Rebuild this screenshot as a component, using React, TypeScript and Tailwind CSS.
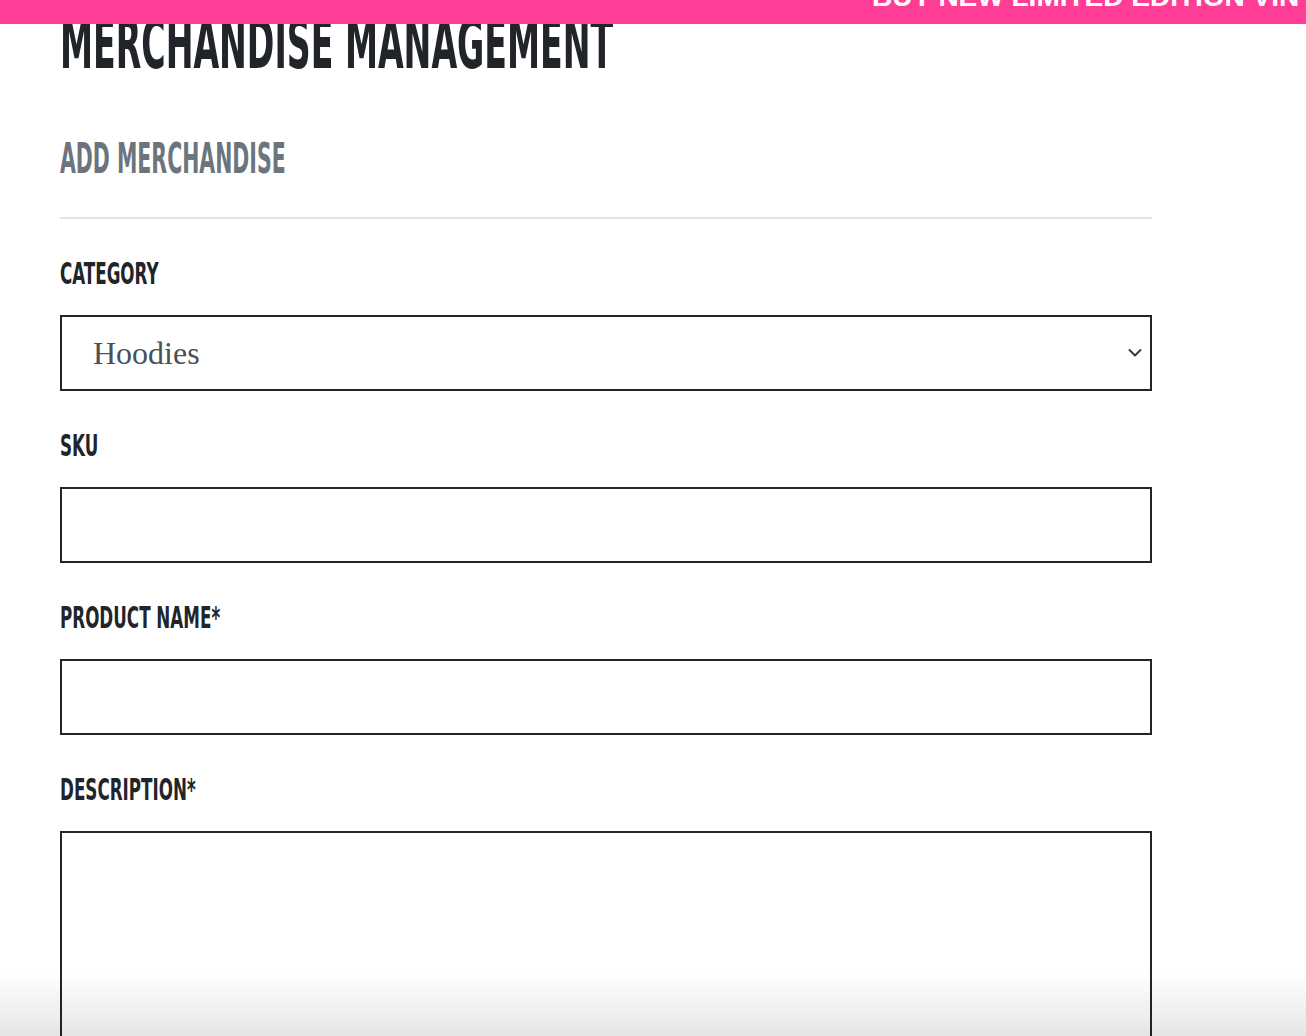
import React from 'react';

const display = { fontFamily: "'Liberation Sans Narrow', 'DejaVu Sans Condensed', 'Liberation Sans', sans-serif" };

interface FieldProps {
  label: string;
  children: React.ReactNode;
}

const Field: React.FC<FieldProps> = ({ label, children }) => (
  <div>
    <label
      style={display}
      className="mt-[39px] block h-[31px] text-[31px] font-bold leading-none text-[#212529] whitespace-nowrap"
    >
      <span className="inline-block origin-left scale-x-[0.6]">{label}</span>
    </label>
    <div className="mt-[26px]">{children}</div>
  </div>
);

export default function App() {
  return (
    <div className="relative h-[1036px] overflow-hidden bg-white">
      {/* promo banner, sits over the page */}
      <div className="absolute inset-x-0 top-0 z-10 h-[24px] overflow-hidden bg-[#ff3c96]">
        <span
          className="absolute left-[872px] top-[-17px] whitespace-nowrap text-[28px] font-bold leading-none text-white"
          style={{ fontFamily: "'Liberation Sans', sans-serif" }}
        >
          BUY NEW LIMITED EDITION VINYL NOW
        </span>
      </div>

      <main className="pl-[60px] w-[1152px]">
        <h1
          style={display}
          className="mt-[9px] h-[70px] text-[70px] font-bold leading-none text-[#212529] whitespace-nowrap"
        >
          <span className="inline-block origin-left scale-x-[0.527]">MERCHANDISE MANAGEMENT</span>
        </h1>

        <h2
          style={display}
          className="mt-[59px] h-[42px] text-[42px] font-bold leading-none text-[#6c757d] whitespace-nowrap"
        >
          <span className="inline-block origin-left scale-x-[0.542]">ADD MERCHANDISE</span>
        </h2>

        <div className="mt-[37px] h-[2px] bg-[#e3e3e3]" />

        <form>
          <Field label="CATEGORY">
            <div className="relative">
              <select
                defaultValue="hoodies"
                className="block h-[76px] w-full appearance-none border-2 border-[#212529] bg-white pl-[31px] text-[32px] text-[#495057] outline-none"
                style={{ fontFamily: "'Liberation Serif', serif" }}
              >
                <option value="hoodies">Hoodies</option>
                <option value="tshirts">T-Shirts</option>
                <option value="vinyl">Vinyl</option>
              </select>
              <svg
                className="pointer-events-none absolute right-[9px] top-1/2 h-[12px] w-[16px] -translate-y-1/2"
                viewBox="0 0 16 12"
                fill="none"
                stroke="#343a40"
                strokeWidth={2}
                strokeLinecap="round"
                strokeLinejoin="round"
              >
                <path d="M2.5 3l5.5 5.5 5.5-5.5" />
              </svg>
            </div>
          </Field>

          <Field label="SKU">
            <input type="text" className="block h-[76px] w-full border-2 border-[#212529] bg-white px-4 outline-none" />
          </Field>

          <Field label="PRODUCT NAME*">
            <input type="text" className="block h-[76px] w-full border-2 border-[#212529] bg-white px-4 outline-none" />
          </Field>

          <Field label="DESCRIPTION*">
            <textarea className="block h-[260px] w-full resize-none border-2 border-[#212529] bg-white px-4 outline-none" />
          </Field>
        </form>
      </main>

      {/* bottom fade */}
      <div className="pointer-events-none absolute inset-x-0 bottom-0 h-[64px] bg-linear-to-b from-black/0 to-black/10" />
    </div>
  );
}
